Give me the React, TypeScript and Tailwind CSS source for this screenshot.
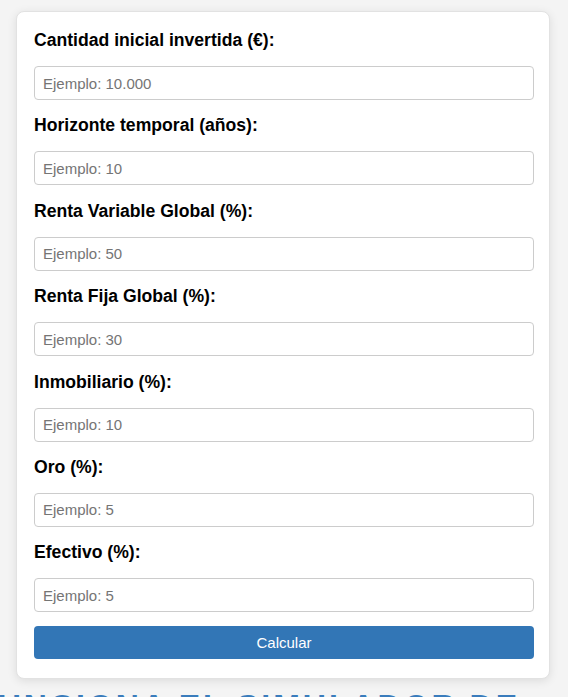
import { useState } from 'react';

const fields = [
    { key: 'capital', label: 'Cantidad inicial invertida (€):', placeholder: 'Ejemplo: 10.000' },
    { key: 'years', label: 'Horizonte temporal (años):', placeholder: 'Ejemplo: 10' },
    { key: 'equity', label: 'Renta Variable Global (%):', placeholder: 'Ejemplo: 50' },
    { key: 'bonds', label: 'Renta Fija Global (%):', placeholder: 'Ejemplo: 30' },
    { key: 'realEstate', label: 'Inmobiliario (%):', placeholder: 'Ejemplo: 10' },
    { key: 'gold', label: 'Oro (%):', placeholder: 'Ejemplo: 5' },
    { key: 'cash', label: 'Efectivo (%):', placeholder: 'Ejemplo: 5' },
];

export default function App() {
    const [values, setValues] = useState<Record<string, string>>({});

    return (
        <div className="h-[697px] bg-[#f4f4f4] pt-[11px] overflow-hidden font-['Liberation_Sans',Arial,sans-serif]">
            {/* Simulator form */}
            <form
                onSubmit={(e) => e.preventDefault()}
                className="ml-4 mr-[18px] bg-white border border-[#e2e2e2] rounded-lg shadow-[0_2px_10px_rgba(0,0,0,0.1)] pl-[17px] pr-[15px] pt-[18px] pb-[19px]"
            >
                {fields.map((f, i) => (
                    <div key={f.key} className={i < fields.length - 1 ? 'mb-[15.4px]' : ''}>
                        <label className="block text-[17.6px] leading-[20px] font-bold text-black mb-[16px]">
                            {f.label}
                        </label>
                        <input
                            type="number"
                            value={values[f.key] ?? ''}
                            onChange={(e) => setValues({ ...values, [f.key]: e.target.value })}
                            placeholder={f.placeholder}
                            className="block w-full h-[34px] px-2 border border-[#cccccc] rounded-[4px] text-[15px] text-black placeholder:text-[#757575] outline-none"
                        />
                    </div>
                ))}

                <button
                    type="submit"
                    className="mt-[14px] w-full h-[33px] bg-[#3276b6] text-white text-[15px] rounded-[4px]"
                >
                    Calcular
                </button>
            </form>

            {/* Section heading below the form */}
            <div className="mt-[9px] pr-[48px] flex justify-end">
                <h2 className="shrink-0 whitespace-nowrap text-[32px] leading-[37px] font-bold uppercase tracking-[3px] text-[#3a7cbc]">
                    ¿Cómo funciona el simulador de
                </h2>
            </div>
        </div>
    );
}
